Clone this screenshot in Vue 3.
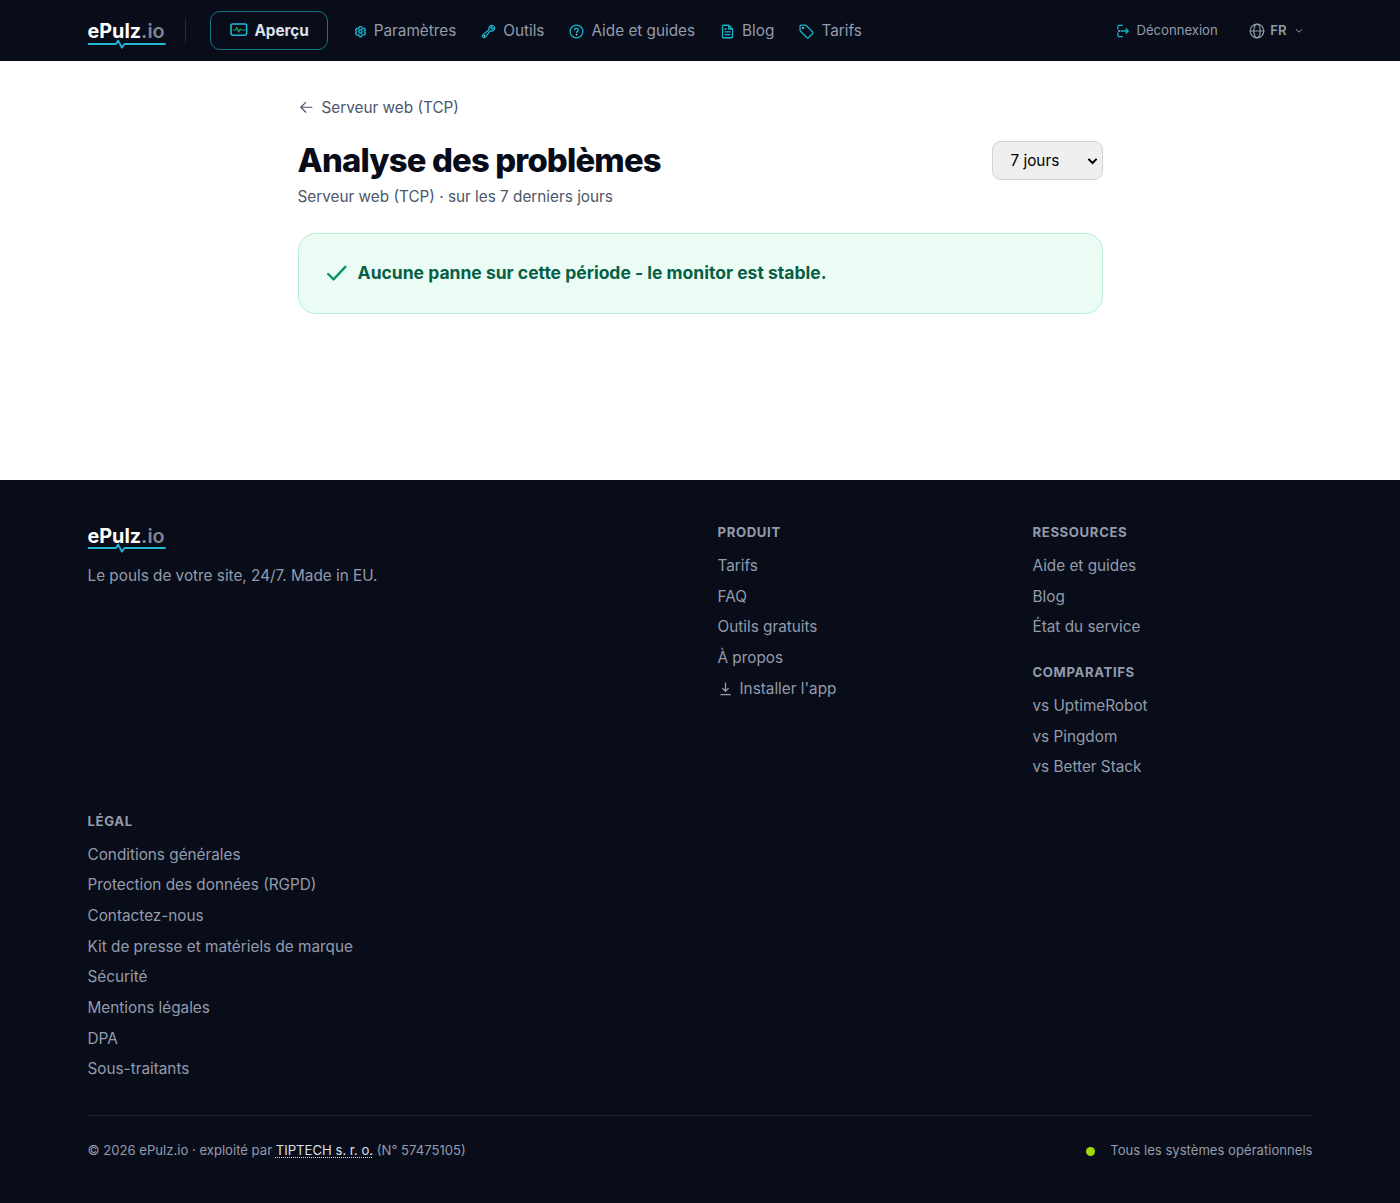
<script setup>
const nav = [
  { label: 'Paramètres', icon: 'gear' },
  { label: 'Outils', icon: 'wrench' },
  { label: 'Aide et guides', icon: 'help' },
  { label: 'Blog', icon: 'doc' },
  { label: 'Tarifs', icon: 'tag' },
]
const produit = ['Tarifs', 'FAQ', 'Outils gratuits', 'À propos']
const ressources = ['Aide et guides', 'Blog', 'État du service']
const comparatifs = ['vs UptimeRobot', 'vs Pingdom', 'vs Better Stack']
const legal = [
  'Conditions générales',
  'Protection des données (RGPD)',
  'Contactez-nous',
  'Kit de presse et matériels de marque',
  'Sécurité',
  'Mentions légales',
  'DPA',
  'Sous-traitants',
]
</script>

<template>
  <div class="page">
    <header class="topbar">
      <div class="container bar">
        <a class="logo">
          <span class="word">ePulz<span class="tld">.io</span></span>
          <svg class="pulse" viewBox="0 0 78 10"><path d="M0 5H28l2.200-3.400 3.600 7L36.500 5H77" /></svg>
        </a>
        <span class="divider"></span>
        <a class="active">
          <svg class="monitor" viewBox="0 0 18 14">
            <rect x="1" y="1" width="15.600" height="11.200" rx="1.600" />
            <path d="M3.200 7h2.300l1.300-2.400L8.700 9l1.500-3.200.8 1.200h3.700" />
          </svg>
          <span>Aperçu</span>
        </a>
        <nav class="links">
          <a v-for="n in nav" :key="n.label" :class="n.icon">
            <svg v-if="n.icon === 'gear'" viewBox="0 0 24 24">
              <path d="M9.600 3.900c.1-.6.600-.9 1.100-.9h2.600c.5 0 1 .3 1.100.9l.2 1.300c.1.4.3.7.6.9l.9.5c.3.200.700.200 1 .1l1.200-.5c.5-.200 1.100 0 1.400.5l1.300 2.200c.3.500.2 1.100-.3 1.500l-1 .8c-.3.300-.4.600-.4 1v.2c0 .4.100.700.4 1l1 .8c.5.400.6 1 .3 1.500l-1.300 2.200c-.3.500-.9.700-1.400.5l-1.200-.5c-.3-.1-.7-.1-1 .1l-.9.500c-.3.200-.5.500-.6.900l-.2 1.300c-.1.500-.6.900-1.100.900h-2.600c-.5 0-1-.4-1.100-.9l-.2-1.300c-.1-.4-.3-.7-.6-.9l-.9-.5c-.3-.2-.7-.2-1-.1l-1.200.5c-.5.200-1.100 0-1.400-.5l-1.300-2.200c-.3-.5-.2-1.100.3-1.500l1-.8c.3-.3.4-.6.400-1v-.2c0-.4-.1-.7-.4-1l-1-.8c-.5-.4-.6-1-.3-1.500l1.300-2.200c.3-.5.900-.7 1.400-.5l1.200.5c.3.100.7.100 1-.1l.9-.5c.3-.2.500-.5.600-.9z" />
              <circle cx="12" cy="12" r="3.200" />
            </svg>
            <svg v-else-if="n.icon === 'wrench'" viewBox="0 0 24 24">
              <path d="M21.750 6.750a4.500 4.500 0 0 1-4.884 4.484c-1.076-.091-2.264.071-2.950.904l-7.152 8.684a2.548 2.548 0 1 1-3.586-3.586l8.684-7.152c.833-.686.995-1.874.904-2.950a4.500 4.500 0 0 1 6.336-4.486l-3.276 3.276a3.004 3.004 0 0 0 2.250 2.250l3.276-3.276c.256.565.398 1.192.398 1.852Z" />
              <circle class="dot" cx="5" cy="19" r=".5" />
            </svg>
            <svg v-else-if="n.icon === 'help'" viewBox="0 0 24 24">
              <circle cx="12" cy="12" r="10.200" />
              <path d="M9 9.300c.5-3.400 6-3.200 6 .2 0 2.300-3 2.200-3 4.300" />
              <circle class="dot" cx="12" cy="17.200" r=".6" />
            </svg>
            <svg v-else-if="n.icon === 'doc'" viewBox="0 0 24 24">
              <path d="M14 2H5.500A1.500 1.500 0 0 0 4 3.500v17A1.500 1.500 0 0 0 5.500 22h13a1.500 1.500 0 0 0 1.500-1.500V8zM14 2v6h6M8 12.500h8M8 17h8M8 8h2" />
            </svg>
            <svg v-else viewBox="0 0 24 24">
              <path d="M10 1.700H3.200A1.500 1.500 0 0 0 1.700 3.200V10c0 .6.200 1.200.7 1.600l9.900 9.900c.9.900 2.300.9 3.200 0l6-6c.9-.9.900-2.300 0-3.200l-9.900-9.900A2.300 2.300 0 0 0 10 1.700z" />
              <circle class="dot" cx="6.300" cy="6.300" r=".8" />
            </svg>
            <span>{{ n.label }}</span>
          </a>
        </nav>
        <a class="logout">
          <svg viewBox="0 0 14 14">
            <path d="M6.300 1.300H3.500A1.700 1.700 0 0 0 1.800 3v2M1.800 9v2a1.700 1.700 0 0 0 1.700 1.700h2.800M5 7h7.300M10 4.700 12.300 7 10 9.300" />
            <circle class="dot" cx="3" cy="7" r=".2" />
          </svg>
          <span>Déconnexion</span>
        </a>
        <a class="lang">
          <svg class="globe" viewBox="0 0 16 16"><circle cx="8" cy="8" r="6.800" /><ellipse cx="8" cy="8" rx="3.200" ry="6.800" /><path d="M1.200 8h13.600" /></svg>
          <span>FR</span>
          <svg class="chev" viewBox="0 0 8 6"><path d="m1.200 1.500 2.800 2.700 2.800-2.700" /></svg>
        </a>
      </div>
    </header>

    <main>
      <a class="back">
        <svg viewBox="0 0 18 18"><path d="M14.300 8.500H3.100M8 3.400 2.900 8.500l5.100 5.100" /></svg>
        <span>Serveur web (TCP)</span>
      </a>
      <div class="heading">
        <div>
          <h1>Analyse des problèmes</h1>
          <p>Serveur web (TCP) · sur les 7 derniers jours</p>
        </div>
        <div class="select" role="combobox" tabindex="0">
          <span>7 jours</span>
          <svg viewBox="0 0 12 8"><path d="M1.500 1.700 6 6.200l4.500-4.500" /></svg>
        </div>
      </div>
      <section class="notice">
        <svg viewBox="0 0 24 24"><path d="m3.500 13.200 5.900 5.900L22.300 5.300" /></svg>
        <strong>Aucune panne sur cette période - le monitor est stable.</strong>
      </section>
    </main>

    <footer>
      <div class="container">
        <div class="grid">
          <div class="brand">
            <a class="logo">
              <span class="word">ePulz<span class="tld">.io</span></span>
              <svg class="pulse" viewBox="0 0 78 10"><path d="M0 5H28l2.200-3.400 3.600 7L36.500 5H77" /></svg>
            </a>
            <p>Le pouls de votre site, 24/7. Made in EU.</p>
          </div>
          <div>
            <h2>Produit</h2>
            <ul>
              <li v-for="t in produit" :key="t">{{ t }}</li>
              <li class="install">
                <svg viewBox="0 0 16 16"><path d="M7.500 2v8M4.700 7.400l2.800 2.800 2.800-2.800M3 13.700h9.300" /></svg>
                <span>Installer l'app</span>
              </li>
            </ul>
          </div>
          <div>
            <h2>Ressources</h2>
            <ul><li v-for="t in ressources" :key="t">{{ t }}</li></ul>
            <h2 class="second">Comparatifs</h2>
            <ul><li v-for="t in comparatifs" :key="t">{{ t }}</li></ul>
          </div>
          <div class="legal">
            <h2>Légal</h2>
            <ul><li v-for="t in legal" :key="t">{{ t }}</li></ul>
          </div>
        </div>
        <div class="bottom">
          <span>© 2026 ePulz.io · exploité par <abbr>TIPTECH s. r. o.</abbr> (N° 57475105)</span>
          <span class="status"><i></i>Tous les systèmes opérationnels</span>
        </div>
      </div>
    </footer>
  </div>
</template>

<style>
html { font-size: 17.5px; }
body { margin: 0; background: #fff; }
</style>

<style scoped>
.page { font-family: Inter, "Liberation Sans", sans-serif; font-size: 0.875rem; line-height: 1.25rem; color: #949bac; }
svg { fill: none; stroke: currentColor; stroke-width: 1.3; stroke-linecap: round; stroke-linejoin: round; flex: none; display: block; }
a { white-space: nowrap; }
.container { width: 70rem; margin: 0 auto; }
.topbar { background: #080d19; height: 3.5rem; }
.bar { display: flex; align-items: center; height: 100%; }
.logo { display: block; width: 77.5px; }
.word { display: block; font-size: 19.8px; line-height: 24px; font-weight: 700; color: #fff; }
.tld { color: #7f8599; font-weight: 600; }
.pulse { width: 78px; height: 10px; margin-top: -4px; color: #22b8d4; stroke-width: 1.8; }
.topbar .logo { padding-top: 7px; }
.divider { width: 1px; height: 24px; background: #292e3e; margin-left: 20px; }
.active { box-sizing: border-box; margin-left: 24px; width: 118px; height: 39.4px; border: 1px solid #157687; border-radius: 10px; display: flex; align-items: center; padding-left: 18.5px; gap: 7px; font-weight: 700; letter-spacing: -0.05px; color: #dce0ea; }
.monitor { width: 18px; height: 14px; margin-top: -1px; color: #22b8d4; stroke-width: 1.6; }
.monitor path { stroke: #249b65; stroke-width: 1.2; }
.links { display: flex; gap: 25px; margin-left: 25.7px; }
.links a { display: flex; align-items: center; gap: 7px; }
.links svg { width: 15px; height: 15px; margin-top: 1px; color: #16b3cb; stroke-width: 2.1; }
.links .gear svg { width: 13px; height: 13px; stroke-width: 2.5; }
.dot { fill: #d6f7ff; stroke: #d6f7ff; stroke-width: 1; }
.logout { margin-left: auto; display: flex; align-items: center; gap: 7px; font-size: 0.75rem; }
.logout svg { width: 14px; height: 14px; color: #16b3cb; }
.lang { display: flex; align-items: center; margin-left: 31px; font-size: 0.75rem; font-weight: 600; margin-right: 10px; }
.globe { width: 16px; height: 16px; margin-right: 5.5px; stroke-width: 1.2; }
.chev { width: 8px; height: 6px; margin-left: 8px; stroke-width: 1; }

main { width: 46rem; height: 383.25px; padding-top: 35.5px; margin: 0 auto; color: #4b566b; }
.back { display: flex; align-items: center; gap: 6.5px; }
.back svg { width: 17.5px; height: 17.5px; stroke-width: 1.2; }
.heading { display: flex; justify-content: space-between; align-items: flex-start; margin-top: 22px; }
h1 { margin: 0; font-size: 1.875rem; line-height: 2.25rem; font-weight: 800; letter-spacing: -0.025em; color: #080c18; }
.heading p { margin: 5.6px 0 0; }
.select { box-sizing: border-box; width: 110.5px; height: 39.6px; border: 1px solid #d0d2d6; border-radius: 8.75px; background: #efefef; color: #000; display: flex; align-items: center; justify-content: space-between; padding: 1px 4px 0 17.5px; }
.select svg { width: 11px; height: 8px; stroke-width: 2.2; stroke-linecap: butt; stroke-linejoin: miter; }
.notice { box-sizing: border-box; height: 80.6px; margin-top: 25.9px; border: 1px solid #b5f0d3; border-radius: 17.5px; background: #eafcf4; display: flex; align-items: flex-start; gap: 0.625rem; padding: 25.5px 1.5rem; line-height: 1.5rem; font-size: 1rem; }
.notice svg { width: 1.25rem; height: 1.25rem; margin-top: 2px; color: #109467; stroke-width: 2.6; }
.notice strong { font-weight: 700; color: #065f46; }

footer { background: #080d19; padding: 2.5rem 0; }
.grid { display: grid; grid-template-columns: repeat(4, 1fr); gap: 2rem; }
.brand { grid-column: span 2; }
.brand .pulse { margin-top: -4.3px; }
.brand p { margin: 11.3px 0 0; }
h2 { margin: 0 0 0.75rem; font-size: 0.75rem; line-height: 1rem; font-weight: 700; letter-spacing: 0.05em; text-transform: uppercase; }
h2.second { margin-top: 1.5rem; }
ul { list-style: none; margin: 0 0 -0.7px; padding: 0.7px 0 0; display: flex; flex-direction: column; gap: 0.5rem; }
.install { display: flex; align-items: center; gap: 6px; }
.install svg { width: 16px; height: 16px; stroke-width: 1.3; }
.legal { grid-column: span 2; }
.bottom { margin-top: 35.4px; border-top: 1px solid #1a1e38; padding-top: 1.5rem; display: flex; justify-content: space-between; font-size: 0.75rem; line-height: 1rem; }
abbr { color: #dce0e8; text-decoration: underline dotted 1px; text-underline-offset: 2px; }
.status { display: flex; align-items: center; gap: 15px; }
.status i { width: 9px; height: 9px; border-radius: 50%; background: #a3d90c; margin-top: 2px; }
</style>
